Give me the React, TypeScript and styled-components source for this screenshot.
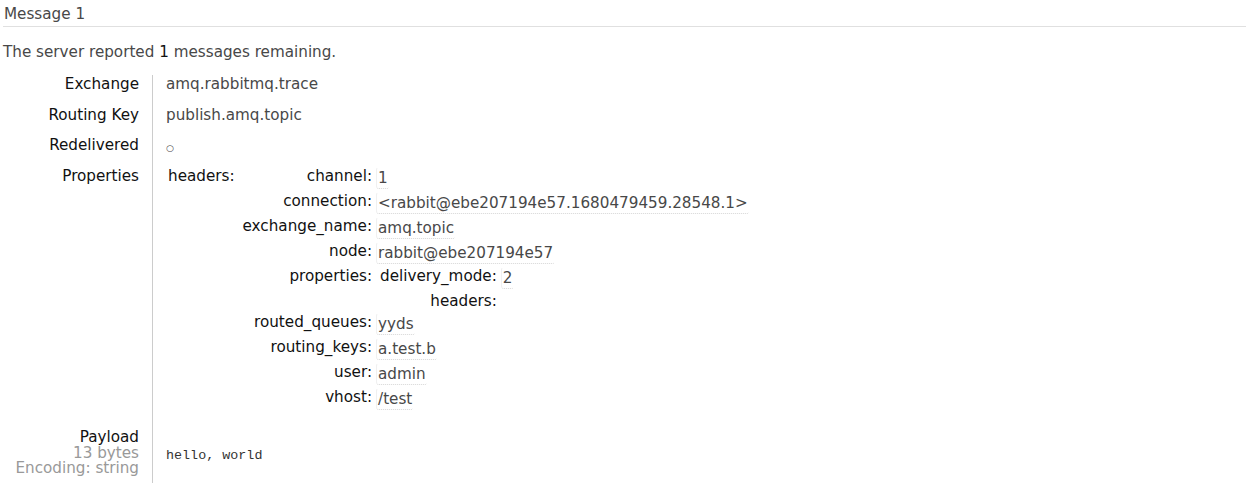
import React from 'react';
import styled, { createGlobalStyle } from 'styled-components';

const GlobalStyle = createGlobalStyle`
  body {
    margin: 0;
    background: #fff;
    font-family: "DejaVu Sans", Verdana, sans-serif;
    font-size: 15.2px;
    color: #484848;
  }
`;

type Props = { [key: string]: string | Props };

const message = {
  exchange: 'amq.rabbitmq.trace',
  routingKey: 'publish.amq.topic',
  redelivered: false,
  properties: {
    headers: {
      channel: '1',
      connection: '<rabbit@ebe207194e57.1680479459.28548.1>',
      exchange_name: 'amq.topic',
      node: 'rabbit@ebe207194e57',
      properties: { delivery_mode: '2', headers: {} },
      routed_queues: 'yyds',
      routing_keys: 'a.test.b',
      user: 'admin',
      vhost: '/test',
    },
  } as Props,
  payload: 'hello, world',
  bytes: 13,
  encoding: 'string',
};

const Page = styled.div`
  padding: 0 0 0 3px;
`;

const SectionTitle = styled.h2`
  margin: 0;
  padding: 5px 0 3px 1px;
  line-height: 18px;
  font-size: 15.2px;
  font-weight: normal;
  color: #484848;
  border-bottom: 1px solid #e0e0e0;
`;

const Summary = styled.p`
  margin: 16px 0 14px;
  line-height: 18px;

  b {
    font-weight: normal;
    color: #111;
  }
`;

const Facts = styled.div`
  display: grid;
  grid-template-columns: 149px 1fr;
`;

const Label = styled.div`
  text-align: right;
  padding: 0 13px 12.5px 0;
  line-height: 18px;
  color: #111;
`;

const PayloadLabel = styled(Label)`
  line-height: 15.6px;

  span {
    display: block;
    color: #999;
  }
`;

const Value = styled.div`
  border-left: 1px solid #ccc;
  padding: 0 0 12.5px 13px;
  line-height: 18px;
  color: #484848;
  min-height: 18px;
`;

const Bool = styled.span`
  display: inline-block;
  font-size: 9px;
  line-height: 0;
  position: relative;
  top: 1px;
`;

const MiniTable = styled.table<{ $nested?: boolean }>`
  border-collapse: separate;
  border-spacing: 2px;
  margin: ${p => (p.$nested ? '-2px 0 -3px 2px' : '-2px 0 5px')};
  font-size: inherit;
  line-height: 18px;
`;

const MiniKey = styled.th<{ $gap: number }>`
  font-weight: normal;
  text-align: right;
  vertical-align: top;
  white-space: nowrap;
  padding: 0 ${p => p.$gap}px 1px 0;
  color: #111;
`;

const MiniVal = styled.td`
  vertical-align: top;
  padding: 0 0 1px;
  white-space: nowrap;
`;

const ValueBox = styled.span`
  display: inline-block;
  padding: 1px 1px;
  border: 1px solid transparent;
  border-left-color: #f0f0f0;
  border-bottom: 1px dotted #d6d6d6;
  border-radius: 3px;
  color: #484848;
`;

const Payload = styled.pre`
  margin: 18px 0 0;
  font-family: "Liberation Mono", "DejaVu Sans Mono", monospace;
  font-size: 13.4px;
  line-height: 16px;
  color: #333;
`;

function MiniFacts({ data, nested, gap }: { data: Props; nested?: boolean; gap: number }) {
  return (
    <MiniTable $nested={nested}>
      <tbody>
        {Object.entries(data).map(([key, val]) => (
          <tr key={key}>
            <MiniKey $gap={gap}>{key}:</MiniKey>
            <MiniVal>
              {typeof val === 'string' ? (
                <ValueBox>{val}</ValueBox>
              ) : Object.keys(val).length ? (
                <MiniFacts data={val} nested gap={2} />
              ) : null}
            </MiniVal>
          </tr>
        ))}
      </tbody>
    </MiniTable>
  );
}

export default function App() {
  return (
    <Page>
      <GlobalStyle />
      <SectionTitle>Message 1</SectionTitle>
      <Summary>
        The server reported <b>1</b> messages remaining.
      </Summary>
      <Facts>
        <Label>Exchange</Label>
        <Value>{message.exchange}</Value>
        <Label>Routing Key</Label>
        <Value>{message.routingKey}</Value>
        <Label>Redelivered</Label>
        <Value>
          <Bool>{message.redelivered ? '●' : '○'}</Bool>
        </Value>
        <Label>Properties</Label>
        <Value>
          <MiniFacts data={message.properties} gap={2} />
        </Value>
        <PayloadLabel>
          Payload
          <span>{message.bytes} bytes</span>
          <span>Encoding: {message.encoding}</span>
        </PayloadLabel>
        <Value>
          <Payload>{message.payload}</Payload>
        </Value>
      </Facts>
    </Page>
  );
}
